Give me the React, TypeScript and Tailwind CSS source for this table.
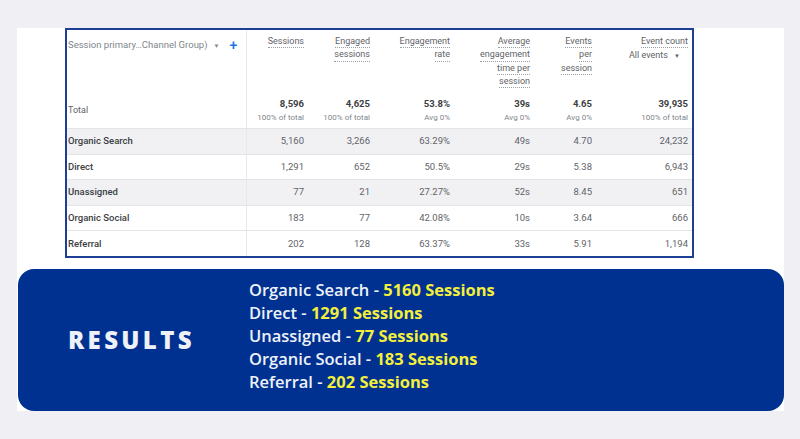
import React from "react";

type Row = {
  name: string;
  values: string[];
  shaded: boolean;
};

const rows: Row[] = [
  { name: "Organic Search", values: ["5,160", "3,266", "63.29%", "49s", "4.70", "24,232"], shaded: true },
  { name: "Direct", values: ["1,291", "652", "50.5%", "29s", "5.38", "6,943"], shaded: false },
  { name: "Unassigned", values: ["77", "21", "27.27%", "52s", "8.45", "651"], shaded: true },
  { name: "Organic Social", values: ["183", "77", "42.08%", "10s", "3.64", "666"], shaded: false },
  { name: "Referral", values: ["202", "128", "63.37%", "33s", "5.91", "1,194"], shaded: false },
];

const headers: string[][] = [
  ["Sessions"],
  ["Engaged", "sessions"],
  ["Engagement", "rate"],
  ["Average", "engagement", "time per", "session"],
  ["Events", "per", "session"],
];

const totals = [
  { value: "8,596", sub: "100% of total" },
  { value: "4,625", sub: "100% of total" },
  { value: "53.8%", sub: "Avg 0%" },
  { value: "39s", sub: "Avg 0%" },
  { value: "4.65", sub: "Avg 0%" },
  { value: "39,935", sub: "100% of total" },
];

const results = [
  { label: "Organic Search", value: "5160 Sessions" },
  { label: "Direct", value: "1291 Sessions" },
  { label: "Unassigned", value: "77 Sessions" },
  { label: "Organic Social", value: "183 Sessions" },
  { label: "Referral", value: "202 Sessions" },
];

const cols = "grid grid-cols-[180px_63px_66px_80px_80px_62px_94px]";

const HeaderLabel = ({ lines }: { lines: string[] }) => (
  <div className="flex flex-col items-end leading-[12.3px]">
    {lines.map((l) => (
      <span key={l} className="border-b border-dotted border-[#9aa0a6]">
        {l}
      </span>
    ))}
  </div>
);

export default function App() {
  return (
    <div className="h-[439px] w-[800px] bg-[#efeff4] pt-[28px]" style={{ fontFamily: "Roboto, sans-serif" }}>
      <div className="ml-[17px] h-[383px] w-[767px] bg-white">
        {/* GA4 table */}
        <div className="ml-[48px] w-[629px] border-2 border-[#1c3f94] text-[9px] text-[#5f6368]">
          <div className={`${cols} h-[98px]`}>
            <div className="flex flex-col justify-between border-r border-[#e8e8ec] pb-[11px] pl-[1px] pt-[8px]">
              <div className="flex items-center text-[#80868b]">
                <span className="text-[9.5px]">Session primary…Channel Group)</span>
                <span className="ml-[6px] text-[6px]">▼</span>
                <span className="ml-[10px] text-[14px] font-medium leading-none text-[#1a73e8]">+</span>
              </div>
              <span className="text-[#5f6368]">Total</span>
            </div>
            {headers.map((h, i) => (
              <div key={i} className="flex flex-col justify-between pb-[4px] pr-[6px] pt-[5px] text-right">
                <HeaderLabel lines={h} />
                <div className="flex flex-col items-end">
                  <span className="text-[9.5px] font-bold text-[#3c4043]">{totals[i].value}</span>
                  <span className="mt-[1px] text-[8px] text-[#80868b]">{totals[i].sub}</span>
                </div>
              </div>
            ))}
            <div className="flex flex-col justify-between pb-[4px] pr-[4px] pt-[5px] text-right">
              <div className="flex flex-col items-end leading-[12.3px]">
                <span className="border-b border-dotted border-[#9aa0a6]">Event count</span>
                <span className="mr-[8px] mt-[1px]">
                  All events <span className="ml-[4px] text-[6px]">▼</span>
                </span>
              </div>
              <div className="flex flex-col items-end">
                <span className="text-[9.5px] font-bold text-[#3c4043]">{totals[5].value}</span>
                <span className="mt-[1px] text-[8px] text-[#80868b]">{totals[5].sub}</span>
              </div>
            </div>
          </div>
          {rows.map((r) => (
            <div
              key={r.name}
              className={`${cols} h-[25.6px] items-center border-t border-[#e3e3e8] text-[9.5px] ${r.shaded ? "bg-[#f1f1f4]" : "bg-white"}`}
            >
              <div className="flex h-full items-center border-r border-[#e8e8ec] pl-[1px] font-medium text-[#3c4043]">
                {r.name}
              </div>
              {r.values.map((v, i) => (
                <div key={i} className={`text-right ${i === 5 ? "pr-[4px]" : "pr-[6px]"}`}>
                  {v}
                </div>
              ))}
            </div>
          ))}
        </div>

        {/* Results banner */}
        <div
          className="ml-[1px] mt-[11px] flex h-[142px] w-[766px] items-center rounded-[16px] bg-[#003190]"
          style={{ fontFamily: "'Open Sans', sans-serif" }}
        >
          <div className="w-[231px] pl-[50px] text-[24px] font-extrabold tracking-[0.14em] text-[#eef1f8]">RESULTS</div>
          <div className="-mt-[9px] flex flex-col text-[16.5px] font-semibold leading-[23px]">
            {results.map((r) => (
              <div key={r.label} className="text-[#eef1f8]">
                {r.label} - <span className="font-bold text-[#f3ef3c]">{r.value}</span>
              </div>
            ))}
          </div>
        </div>
      </div>
    </div>
  );
}
